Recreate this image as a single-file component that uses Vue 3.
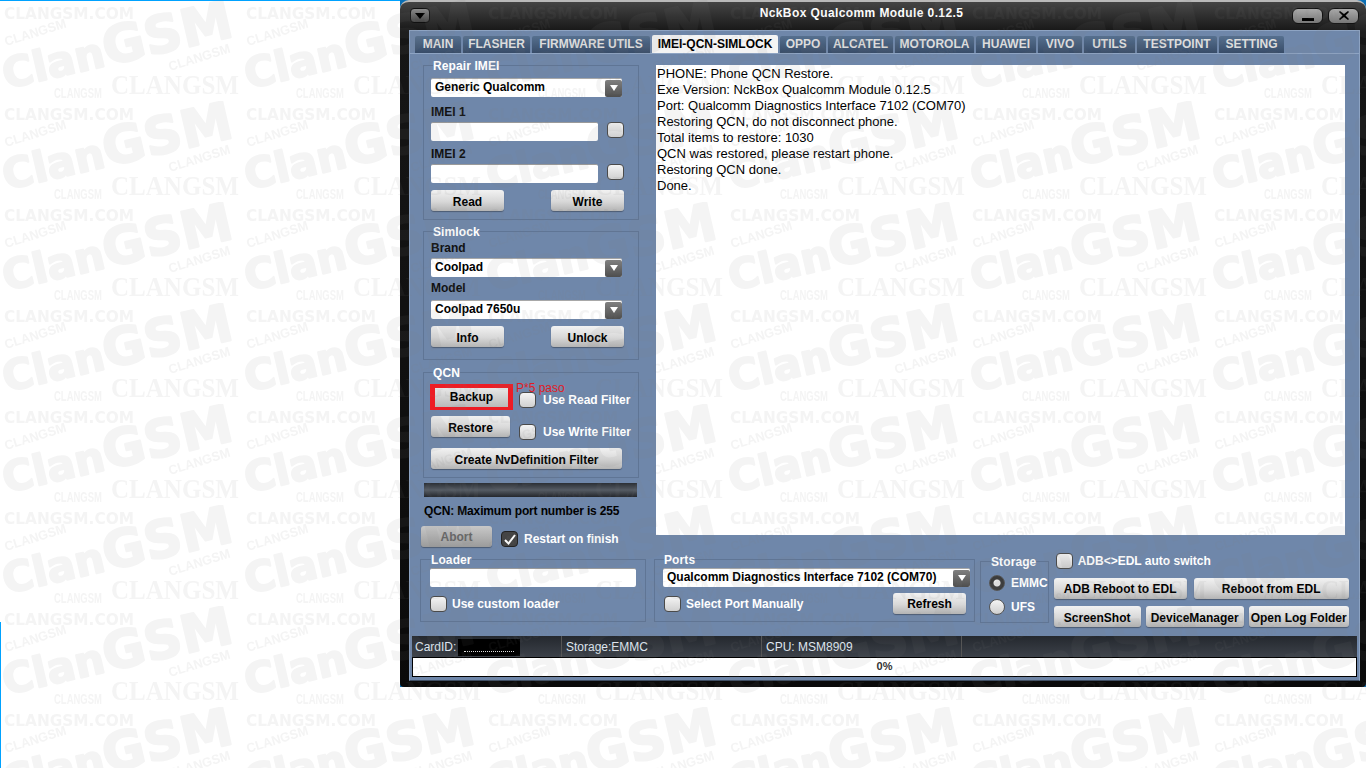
<script setup>
const tabs = [
  { name: 'MAIN', width: 46 },
  { name: 'FLASHER', width: 67 },
  { name: 'FIRMWARE UTILS', width: 118 },
  { name: 'IMEI-QCN-SIMLOCK', width: 126 },
  { name: 'OPPO', width: 46 },
  { name: 'ALCATEL', width: 65 },
  { name: 'MOTOROLA', width: 79 },
  { name: 'HUAWEI', width: 60 },
  { name: 'VIVO', width: 44 },
  { name: 'UTILS', width: 51 },
  { name: 'TESTPOINT', width: 80 },
  { name: 'SETTING', width: 65 }
]

const logLines = [
  'PHONE: Phone QCN Restore.',
  'Exe Version: NckBox Qualcomm Module 0.12.5',
  'Port: Qualcomm Diagnostics Interface 7102 (COM70)',
  'Restoring QCN, do not disconnect phone.',
  'Total items to restore: 1030',
  'QCN was restored, please restart phone.',
  'Restoring QCN done.',
  'Done.'
]
</script>

<template>
  <div class="desktop">
    <div class="edge-top"></div>
    <div class="edge-left"></div>

    <div class="window-back">
      <div class="window">
        <div class="titlebar">
          <button class="menu-btn"><svg width="10" height="6" viewBox="0 0 10 6"><path d="M0 0h10L5 6z" fill="#000"/></svg></button>
          <div class="title">NckBox Qualcomm Module 0.12.5</div>
          <div class="win-btns">
            <button class="win-btn"><svg width="12" height="10" viewBox="0 0 12 10"><rect x="0" y="7" width="12" height="3" fill="#000"/></svg></button>
            <button class="win-btn"><svg width="10" height="9" viewBox="0 0 10 9"><path d="M1 0l4 3 4-3 1 1-3.500 3.500L10 8 9 9 5 6 1 9 0 8l3.500-3.500L0 1z" fill="#000"/></svg></button>
          </div>
        </div>

        <div class="frame">
          <div class="tabs">
            <div
              v-for="t in tabs"
              :key="t.name"
              class="tab"
              :class="{ active: t.name === 'IMEI-QCN-SIMLOCK' }"
              :style="{ width: t.width + 'px' }"
            >{{ t.name }}</div>
          </div>

          <div class="main">
            <div class="left">
              <fieldset class="group imei">
                <legend>Repair IMEI</legend>
                <div class="combo"><span>Generic Qualcomm</span><i class="arrow"><svg width="8" height="6" viewBox="0 0 8 6"><path d="M0 0h8L4 6z" fill="#fff"/></svg></i></div>
                <label class="lbl l1">IMEI 1</label>
                <div class="input-row"><div class="input"></div><div class="check"></div></div>
                <label class="lbl l2">IMEI 2</label>
                <div class="input-row"><div class="input"></div><div class="check"></div></div>
                <div class="btn-row"><button class="btn w73">Read</button><button class="btn w73">Write</button></div>
              </fieldset>

              <fieldset class="group simlock">
                <legend>Simlock</legend>
                <label class="lbl">Brand</label>
                <div class="combo brand"><span>Coolpad</span><i class="arrow"><svg width="8" height="6" viewBox="0 0 8 6"><path d="M0 0h8L4 6z" fill="#fff"/></svg></i></div>
                <label class="lbl model">Model</label>
                <div class="combo modelc"><span>Coolpad 7650u</span><i class="arrow"><svg width="8" height="6" viewBox="0 0 8 6"><path d="M0 0h8L4 6z" fill="#fff"/></svg></i></div>
                <div class="btn-row"><button class="btn w73">Info</button><button class="btn w73">Unlock</button></div>
              </fieldset>

              <fieldset class="group qcn">
                <legend>QCN</legend>
                <div class="qcn-row">
                  <button class="btn backup">Backup</button>
                  <span class="paso">P*5 paso</span>
                  <div class="check"></div><span class="white-lbl">Use Read Filter</span>
                </div>
                <div class="qcn-row second">
                  <button class="btn restore">Restore</button>
                  <div class="check"></div><span class="white-lbl">Use Write Filter</span>
                </div>
                <button class="btn create">Create NvDefinition Filter</button>
              </fieldset>
              <div class="dark-bar"></div>

              <div class="maxport">QCN: Maximum port number is 255</div>
              <div class="abort-row">
                <button class="btn abort">Abort</button>
                <div class="check checked"><svg width="12" height="11" viewBox="0 0 12 11"><path d="M1 6l3.500 3.500L11 1" fill="none" stroke="#fff" stroke-width="2"/></svg></div>
                <span class="white-lbl">Restart on finish</span>
              </div>
            </div>

            <div class="log">
              <div v-for="l in logLines" :key="l">{{ l }}</div>
            </div>
          </div>

          <div class="bottom">
            <fieldset class="group loader">
              <legend>Loader</legend>
              <div class="input wide"></div>
              <div class="opt"><div class="check"></div><span class="white-lbl">Use custom loader</span></div>
            </fieldset>

            <fieldset class="group ports">
              <legend>Ports</legend>
              <div class="combo long"><span>Qualcomm Diagnostics Interface 7102 (COM70)</span><i class="arrow"><svg width="8" height="6" viewBox="0 0 8 6"><path d="M0 0h8L4 6z" fill="#fff"/></svg></i></div>
              <div class="ports-row">
                <div class="check"></div><span class="white-lbl">Select Port Manually</span>
                <button class="btn refresh">Refresh</button>
              </div>
            </fieldset>

            <fieldset class="group storage">
              <legend>Storage</legend>
              <div class="radio-row"><div class="radio on"></div><span class="white-lbl">EMMC</span></div>
              <div class="radio-row"><div class="radio"></div><span class="white-lbl">UFS</span></div>
            </fieldset>

            <div class="actions">
              <div class="opt top"><div class="check"></div><span class="white-lbl">ADB&lt;&gt;EDL auto switch</span></div>
              <div class="act-row one">
                <button class="btn a1">ADB Reboot to EDL</button>
                <button class="btn a2">Reboot from EDL</button>
              </div>
              <div class="act-row two">
                <button class="btn a3">ScreenShot</button>
                <button class="btn a4">DeviceManager</button>
                <button class="btn a5">Open Log Folder</button>
              </div>
            </div>
          </div>

          <div class="status">
            <div class="cell c1">CardID:<span class="redact"></span></div>
            <div class="cell c2">Storage:EMMC</div>
            <div class="cell c3">CPU: MSM8909</div>
            <div class="cell c4"></div>
          </div>
          <div class="progress">0%</div>
        </div>
      </div>
    </div>

    <svg class="watermark" width="1366" height="768">
      <defs>
        <pattern id="wm" x="0" y="0" width="242" height="101" patternUnits="userSpaceOnUse">
          <text x="4" y="19" class="w-a" textLength="130" lengthAdjust="spacingAndGlyphs">CLANGSM.COM</text>
          <text transform="translate(6 46) rotate(-17)" class="w-b" textLength="64" lengthAdjust="spacingAndGlyphs">CLANGSM</text>
          <text transform="translate(6 89) rotate(-13)" class="w-c">Clan<tspan class="w-c2">GSM</tspan></text>
          <text transform="translate(170 71) rotate(-17)" class="w-b" textLength="64" lengthAdjust="spacingAndGlyphs">CLANGSM</text>
          <text x="111" y="94" class="w-d" textLength="128" lengthAdjust="spacingAndGlyphs">CLANGSM</text>
          <text x="54" y="98" class="w-e" textLength="48" lengthAdjust="spacingAndGlyphs">CLANGSM</text>
        </pattern>
      </defs>
      <rect class="wm-fill" width="1366" height="768" fill="url(#wm)" />
    </svg>
  </div>
</template>

<style scoped>
.desktop {
  position: relative;
  width: 1366px;
  height: 768px;
  overflow: hidden;
  background: #fff;
  font-family: "Liberation Sans", Arial, sans-serif;
  font-size: 12px;
}

.edge-top {
  position: absolute;
  left: 0;
  top: 0;
  width: 400px;
  height: 1px;
  background: #00a2ff;
}

.edge-left {
  position: absolute;
  left: 0;
  top: 622px;
  width: 1px;
  height: 146px;
  background: #00a2ff;
}

.window-back {
  position: absolute;
  left: 400px;
  top: 0;
  width: 966px;
  height: 687px;
  background: #0a6fb5;
}

.window {
  width: 966px;
  height: 687px;
  box-sizing: border-box;
  padding: 0 6px 6px 9px;
  border-radius: 9px 9px 4px 4px;
  border-top: 2px solid #b9b9b9;
  background: linear-gradient(180deg, #444 0, #161616 30px, #0a0a0a 100%);
  display: flex;
  flex-direction: column;
}

.titlebar {
  height: 28px;
  flex: none;
  display: flex;
  align-items: center;
  position: relative;
}

.menu-btn {
  width: 20px;
  height: 15px;
  margin: -1px 0 0 1px;
  padding: 0;
  border: 1px solid #111;
  border-radius: 4px;
  background: linear-gradient(180deg, #8a8a8a, #444);
  display: flex;
  align-items: center;
  justify-content: center;
}

.title {
  position: absolute;
  left: 0;
  right: 46px;
  top: 4px;
  text-align: center;
  color: #fff;
  font-weight: bold;
  font-size: 12px;
  letter-spacing: 0.4px;
}

.win-btns {
  margin-left: auto;
  margin-top: -1px;
  margin-right: 1px;
  display: flex;
  gap: 5px;
}

.win-btn {
  width: 31px;
  height: 16px;
  padding: 0;
  border: 1px solid #111;
  border-radius: 6px;
  background: linear-gradient(180deg, #aaa, #777);
  display: flex;
  align-items: center;
  justify-content: center;
}

.frame {
  flex: 1;
  display: flex;
  flex-direction: column;
  background: #6f87aa;
  border: 1px solid #8ea4c3;
  border-bottom-color: #3f4e63;
  min-height: 0;
}

.tabs {
  height: 23px;
  flex: none;
  box-sizing: border-box;
  padding: 5px 0 0 5px;
  display: flex;
  gap: 2px;
  border-bottom: 1px solid #8ea4c3;
}

.tab {
  height: 17px;
  box-sizing: border-box;
  text-align: center;
  line-height: 17px;
  background: linear-gradient(180deg, #56708f, #384c68);
  color: #dcdcdc;
  font-weight: bold;
  font-size: 12px;
  white-space: nowrap;
  border-radius: 2px 2px 0 0;
}

.tab.active {
  margin-top: -1px;
  height: 18px;
  line-height: 19px;
  background: #f4f4f4;
  color: #000;
}

.main {
  height: 481px;
  flex: none;
  display: flex;
}

.left {
  width: 230px;
  flex: none;
  padding: 5px 0 0 13px;
  box-sizing: border-box;
}

.group {
  margin: 0;
  padding: 0;
  border: 1px solid #5f7595;
  box-sizing: border-box;
}

.group legend {
  padding: 0;
  margin-left: 2px;
  color: #fff;
  font-weight: bold;
  font-size: 12px;
  line-height: 13px;
  letter-spacing: 0.1px;
  position: relative;
  top: 1px;
}

.imei {
  width: 216px;
  height: 161px;
  padding: 6px 0 0 7px;
}

.simlock {
  width: 216px;
  height: 135px;
  margin-top: 5px;
  padding: 2px 0 0 7px;
}

.qcn {
  width: 216px;
  height: 112px;
  margin-top: 6px;
  padding: 5px 0 0 7px;
}

.lbl {
  display: block;
  font-weight: bold;
  font-size: 12px;
  line-height: 14px;
  color: #111;
  position: relative;
  top: 1px;
}

.l1 {
  margin-top: 7px;
}

.l2 {
  margin-top: 5px;
}

.brand {
  margin-top: 4px;
}

.model {
  margin-top: 3px;
}

.modelc {
  margin-top: 6px;
}

.combo {
  width: 191px;
  height: 19px;
  box-sizing: border-box;
  background: #fff;
  border-radius: 2px;
  border-top: 1px solid #a8a8a8;
  display: flex;
  align-items: center;
  justify-content: space-between;
  padding: 0 0 0 4px;
  font-weight: bold;
  font-size: 12px;
  color: #000;
  white-space: nowrap;
}

.combo span {
  margin-top: -2px;
}

.arrow {
  width: 17px;
  height: 17px;
  background: linear-gradient(180deg, #808080, #4e4e4e);
  border-radius: 2px;
  display: flex;
  align-items: center;
  justify-content: center;
}

.input-row {
  display: flex;
  gap: 9px;
  margin-top: 4px;
}

.input {
  width: 167px;
  height: 19px;
  background: #fff;
  border-radius: 2px;
  border-top: 1px solid #9a9a9a;
  box-sizing: border-box;
}

.check {
  width: 17px;
  height: 16px;
  flex: none;
  box-sizing: border-box;
  border: 1px solid #4a4a4a;
  border-radius: 4px;
  background: linear-gradient(180deg, #f4f4f4, #d0d0d0);
}

.check.checked {
  background: #444;
  border-color: #222;
  display: flex;
  align-items: center;
  justify-content: center;
}

.btn {
  padding: 2px 0 0;
  height: 21px;
  border: none;
  border-radius: 3px;
  background: linear-gradient(180deg, #f2f2f2 0, #d8d8d8 55%, #b4b4b4 100%);
  box-shadow: 0 1px 1px #4b5b73;
  color: #000;
  font-family: inherit;
  font-weight: bold;
  font-size: 12px;
  white-space: nowrap;
}

.btn-row {
  width: 193px;
  margin-top: 7px;
  display: flex;
  justify-content: space-between;
}

.w73 {
  width: 73px;
}

.qcn-row {
  display: flex;
  align-items: flex-start;
  position: relative;
}

.backup {
  width: 73px;
  height: 17px;
  padding: 0 0 2px;
  box-sizing: content-box;
  border-style: solid;
  border-color: #ed1c24;
  border-width: 4px 5px 3px;
  border-radius: 0;
  margin: 0 0 0 -1px;
  background: linear-gradient(180deg, #e8e8e8, #b9b9b9);
  box-shadow: none;
  flex: none;
}

.paso {
  position: absolute;
  left: 85px;
  top: -3px;
  color: #e01b24;
  font-size: 12px;
}

.qcn-row .check {
  margin: 8px 0 0 6px;
}

.white-lbl {
  color: #fff;
  font-weight: bold;
  font-size: 12px;
  line-height: 15px;
  white-space: nowrap;
}

.qcn-row .white-lbl {
  margin: 9px 0 0 7px;
}

.second {
  margin-top: 6px;
}

.restore {
  width: 79px;
  flex: none;
}

.second .check {
  margin-left: 9px;
}

.create {
  width: 191px;
  margin-top: 8px;
  display: block;
}

.dark-bar {
  width: 213px;
  height: 14px;
  margin: 5px 0 0 1px;
  background: linear-gradient(180deg, #2b2f35, #555b63 50%, #24272c);
}

.maxport {
  margin: 7px 0 0 1px;
  color: #000;
  font-weight: bold;
  font-size: 12px;
  line-height: 15px;
  letter-spacing: -0.15px;
  white-space: nowrap;
}

.abort-row {
  display: flex;
  align-items: flex-start;
  margin: 7px 0 0 -2px;
}

.abort {
  width: 71px;
  padding-top: 1px;
  color: #666;
  margin-right: 9px;
  background: linear-gradient(180deg, #c8c8c8, #9b9b9b);
}

.abort-row .check {
  margin-top: 5px;
}

.abort-row .white-lbl {
  margin: 6px 0 0 6px;
}

.log {
  width: 689px;
  height: 470px;
  margin-top: 11px;
  margin-left: 16px;
  background: #fff;
  box-sizing: border-box;
  padding: 1px 0 0 1px;
  font-size: 13px;
  line-height: 16px;
  color: #000;
  white-space: nowrap;
}

.bottom {
  flex: 1;
  display: flex;
  align-items: flex-start;
  padding: 18px 0 0 10px;
  min-height: 0;
}

.loader {
  width: 226px;
  height: 69px;
  padding: 2px 0 0 9px;
  flex: none;
}

.loader legend {
  margin-left: 1px;
}

.wide {
  width: 206px;
  height: 19px;
}

.opt {
  display: flex;
  gap: 5px;
  align-items: center;
}

.loader .opt {
  margin-top: 9px;
}

.ports {
  margin-left: 8px;
  width: 321px;
  height: 69px;
  padding: 2px 0 0 8px;
  flex: none;
}

.ports legend {
  margin-left: 1px;
}

.long {
  width: 307px;
}

.ports-row {
  display: flex;
  align-items: center;
  margin: 6px 0 0 1px;
  gap: 5px;
}

.ports-row .white-lbl {
  margin-top: 2px;
}

.refresh {
  width: 73px;
  padding-top: 1px;
  margin-left: auto;
  margin-right: 8px;
}

.storage {
  margin: 2px 0 0 5px;
  width: 68px;
  height: 68px;
  padding: 7px 0 0 8px;
  flex: none;
}

.storage legend {
  margin-left: 2px;
}

.radio-row {
  display: flex;
  align-items: center;
  gap: 6px;
  height: 16px;
  margin-bottom: 8px;
}

.radio {
  width: 16px;
  height: 16px;
  box-sizing: border-box;
  flex: none;
  border-radius: 50%;
  border: 1px solid #555;
  background: linear-gradient(180deg, #f4f4f4, #cfcfcf);
}

.radio.on {
  background: radial-gradient(circle, #e8e8e8 0 3px, #3c3c3c 4px);
}

.actions {
  margin-left: 5px;
  width: 300px;
  flex: none;
}

.opt.top {
  margin-left: 2px;
}

.act-row {
  display: flex;
}

.act-row.one {
  margin-top: 9px;
  gap: 7px;
}

.act-row.one .btn {
  padding-top: 1px;
}

.act-row.two {
  margin-top: 7px;
  gap: 5px;
}

.a1 { width: 133px; }
.a2 { width: 155px; }
.a3 { width: 87px; }
.a4 { width: 98px; }
.a5 { width: 100px; }

.status {
  height: 21px;
  flex: none;
  display: flex;
  background: linear-gradient(180deg, #24282e, #3c4149);
  color: #dfe6ef;
  font-size: 12px;
  line-height: 22px;
  margin: 0 2px;
}

.cell {
  padding-left: 3px;
  box-sizing: border-box;
  border-right: 1px solid #555;
  white-space: nowrap;
}

.c1 { width: 150px; }
.c2 { width: 200px; padding-left: 4px; }
.c3 { width: 200px; padding-left: 4px; }
.c4 { flex: 1; border-right: none; }

.redact {
  display: inline-block;
  width: 62px;
  height: 17px;
  margin-left: 2px;
  vertical-align: middle;
  background: #000;
  box-sizing: border-box;
  padding: 12px 6px 0;
}

.redact::after {
  content: "";
  display: block;
  border-top: 1px dotted #ddd;
}

.progress {
  height: 20px;
  flex: none;
  margin: 0 2px 3px;
  box-sizing: border-box;
  border: 1px solid #000;
  background: #fff;
  text-align: center;
  font-weight: bold;
  font-size: 11px;
  line-height: 16px;
  color: #333;
}

.watermark {
  position: absolute;
  left: 0;
  top: 0;
  pointer-events: none;
}

.wm-fill { opacity: 0.085; }

.w-a { font: 900 15px "DejaVu Sans", sans-serif; fill: #787878; }
.w-b { font: 700 13px "Liberation Sans", sans-serif; fill: #787878; }
.w-c { font: 700 42px "DejaVu Sans", sans-serif; fill: #787878; stroke: #787878; stroke-width: 2px; stroke-linejoin: round; }
.w-c2 { font-size: 52px; }
.w-d { font: 700 27px "Liberation Serif", serif; fill: #787878; }
.w-e { font: 700 14px "Liberation Sans", sans-serif; fill: #787878; }
</style>
